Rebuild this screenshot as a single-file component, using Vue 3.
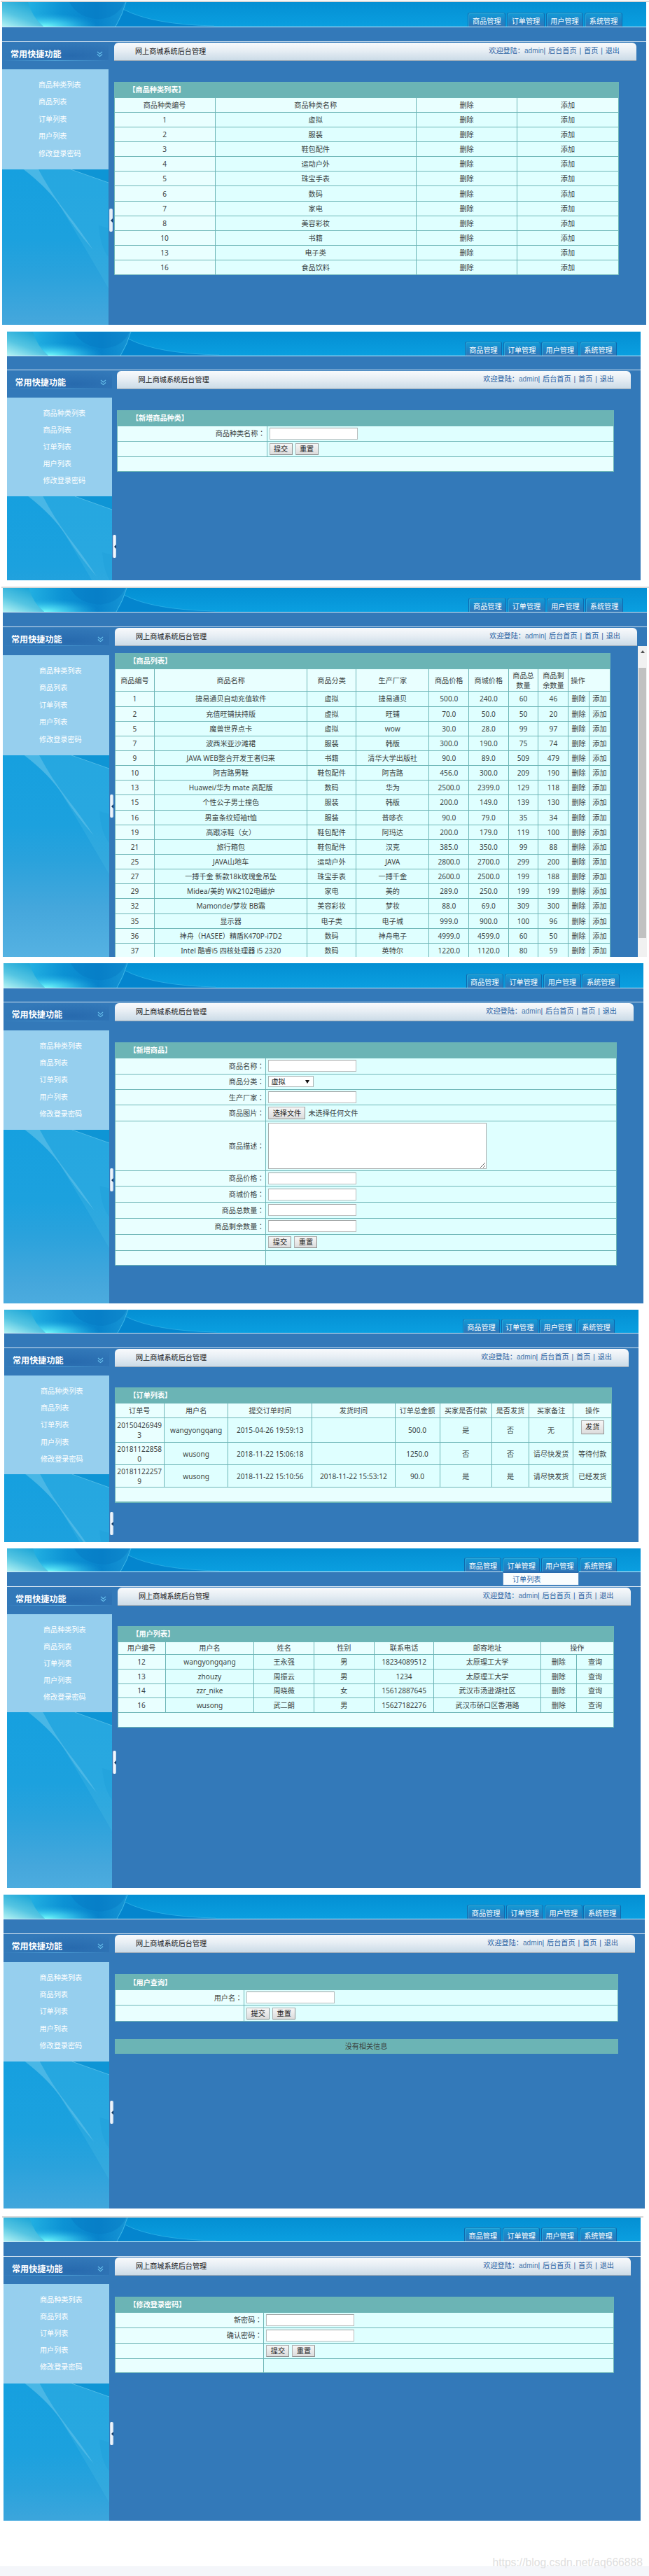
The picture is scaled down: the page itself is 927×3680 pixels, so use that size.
<template>
    <div class="page">
        <section v-for="screen in screens" :key="screen.id" class="screen" :class="'screen-' + screen.id">
            <header class="banner">
                <svg class="banner-art" viewBox="0 0 303 36" preserveAspectRatio="none">
                    <defs>
                        <linearGradient :id="'haze-' + screen.id" x1="0" y1="1" x2="0.7" y2="0">
                            <stop offset="0" stop-color="#b4f3f4" />
                            <stop offset="0.45" stop-color="#55c5e2" />
                            <stop offset="1" stop-color="#17a3d6" />
                        </linearGradient>
                        <linearGradient :id="'disc-' + screen.id" x1="0" y1="0" x2="1" y2="0">
                            <stop offset="0" stop-color="#22b0e2" />
                            <stop offset="0.35" stop-color="#0c92d4" />
                            <stop offset="0.7" stop-color="#0883cb" />
                            <stop offset="1" stop-color="#1695d5" />
                        </linearGradient>
                        <radialGradient :id="'glow-' + screen.id" cx="0.16" cy="1" r="0.55">
                            <stop offset="0" stop-color="#74fbfb" />
                            <stop offset="0.5" stop-color="#40cdee" stop-opacity="0.7" />
                            <stop offset="1" stop-color="#1fa9e0" stop-opacity="0" />
                        </radialGradient>
                    </defs>
                    <path d="M0 0H40Q45 22 62 36H0Z" :fill="`url(#haze-${screen.id})`" />
                    <path d="M37 0H177Q172 18 162 36H59Q43 22 37 0Z" :fill="`url(#disc-${screen.id})`" />
                    <path d="M37 0H177Q172 18 162 36H59Q43 22 37 0Z" :fill="`url(#glow-${screen.id})`" />
                    <path d="M96 0Q108 24 140 25Q166 22 175 0Z" fill="#067ac4" opacity="0.45" />
                    <path d="M174 11Q215 33 303 35V36H162Q170 24 174 11Z" fill="#0481cb" opacity="0.85" />
                    <path d="M174 11Q215 33 303 35" fill="none" stroke="#2fb0e6" stroke-width="0.8" />
                    <path d="M177 0Q172 18 162 36" fill="none" stroke="#4dbdeb" stroke-width="0.8" />
                </svg>
                <nav class="tabs">
                    <span v-for="tab in tabs" :key="tab" class="tab">{{ tab }}</span>
                </nav>
            </header>
            <div class="strip">
                <div v-if="screen.menu" class="dropdown">{{ screen.menu }}</div>
            </div>
            <div class="main">
                <aside class="sidebar">
                    <div class="side-title">
                        <span>常用快捷功能</span>
                        <svg class="chevrons" viewBox="0 0 10 10">
                            <path d="M1 1L5 4.4L9 1M1 5L5 8.4L9 5" fill="none" stroke="#69c3ee" stroke-width="1.2" />
                        </svg>
                    </div>
                    <ul class="side-list">
                        <li v-for="link in links" :key="link">{{ link }}</li>
                    </ul>
                    <div class="side-art">
                        <svg viewBox="0 0 152 290" preserveAspectRatio="none">
                            <path d="M30 0Q66 26 84 55T152 170V0Z" fill="#49b9e6" opacity="0.3" />
                            <path d="M98 0L152 19V0Z" fill="#0b92d2" opacity="0.85" />
                            <path d="M98 0L152 19" stroke="#5cc2ea" stroke-width="0.8" />
                            <path d="M31 0H52Q70 34 92 62T130 115Q103 84 86 57T31 0Z" fill="#79cdef" opacity="0.42" />
                            <path d="M138 80L152 84V125Q140 110 138 80Z" fill="#1d9dda" opacity="0.4" />
                        </svg>
                    </div>
                </aside>
                <div class="grip"><i></i></div>
                <div class="content">
                    <div class="topbar">
                        <span class="site">网上商城系统后台管理</span>
                        <span class="account">欢迎登陆：<em>admin</em>| 后台首页 | 首页 | 退出</span>
                    </div>
                    <div class="grid">
                        <div class="cell title">【{{ screen.title }}】</div>
                        <template v-if="screen.head">
                            <div
                                v-for="(name, i) in screen.head"
                                :key="'h' + i"
                                class="cell pale"
                                :class="{ last: i === screen.head.length - 1 }"
                            >{{ name }}</div>
                            <template v-for="(row, r) in screen.rows" :key="r">
                                <div v-for="(value, c) in row" :key="c" class="cell" :class="{ pale: c === 0 }">
                                    <button v-if="value === '发货'" class="btn ship">发货</button>
                                    <template v-else>{{ value }}</template>
                                </div>
                            </template>
                        </template>
                        <template v-else>
                            <template v-for="(field, f) in screen.fields" :key="f">
                                <div class="cell pale label">{{ field.label }}<span v-if="field.label" class="colon">：</span></div>
                                <div class="cell value">
                                    <input v-if="field.type === 'text'" class="box" type="text">
                                    <span v-else-if="field.type === 'select'" class="select">虚拟<i></i></span>
                                    <template v-else-if="field.type === 'file'">
                                        <button class="btn file">选择文件</button>
                                        <span>未选择任何文件</span>
                                    </template>
                                    <textarea v-else-if="field.type === 'area'" class="area"></textarea>
                                    <template v-else-if="field.type === 'buttons'">
                                        <button class="btn">提交</button>
                                        <button class="btn">重置</button>
                                    </template>
                                </div>
                            </template>
                        </template>
                        <div v-if="screen.blank" class="cell pale blank"></div>
                    </div>
                    <div v-if="screen.notice" class="notice">{{ screen.notice }}</div>
                </div>
                <div v-if="screen.scroll" class="scrollbar">
                    <i class="arrow"></i>
                    <i class="thumb"></i>
                </div>
            </div>
        </section>
        <footer class="foot">
            <span>https://blog.csdn.net/aq666888</span>
        </footer>
    </div>
</template>

<script setup>
const tabs = ['商品管理', '订单管理', '用户管理', '系统管理'];
const links = ['商品种类列表', '商品列表', '订单列表', '用户列表', '修改登录密码'];

const categories = [
    ['1', '虚拟'],
    ['2', '服装'],
    ['3', '鞋包配件'],
    ['4', '运动户外'],
    ['5', '珠宝手表'],
    ['6', '数码'],
    ['7', '家电'],
    ['8', '美容彩妆'],
    ['10', '书籍'],
    ['13', '电子类'],
    ['16', '食品饮料'],
];

const products = [
    ['1', '捷易通贝自动充值软件', '虚拟', '捷易通贝', '500.0', '240.0', '60', '46'],
    ['2', '充值旺铺扶持版', '虚拟', '旺铺', '70.0', '50.0', '50', '20'],
    ['5', '魔兽世界点卡', '虚拟', 'wow', '30.0', '28.0', '99', '97'],
    ['7', '波西米亚沙滩裙', '服装', '韩版', '300.0', '190.0', '75', '74'],
    ['9', 'JAVA WEB整合开发王者归来', '书籍', '清华大学出版社', '90.0', '89.0', '509', '479'],
    ['10', '阿吉路男鞋', '鞋包配件', '阿吉路', '456.0', '300.0', '209', '190'],
    ['13', 'Huawei/华为 mate 高配版', '数码', '华为', '2500.0', '2399.0', '129', '118'],
    ['15', '个性公子男士撞色', '服装', '韩版', '200.0', '149.0', '139', '130'],
    ['16', '男童条纹短袖t恤', '服装', '普哆衣', '90.0', '79.0', '35', '34'],
    ['19', '高跟凉鞋（女）', '鞋包配件', '阿玛达', '200.0', '179.0', '119', '100'],
    ['21', '旅行箱包', '鞋包配件', '汉克', '385.0', '350.0', '99', '88'],
    ['25', 'JAVA山地车', '运动户外', 'JAVA', '2800.0', '2700.0', '299', '200'],
    ['27', '一搏千金 新款18k玫瑰金吊坠', '珠宝手表', '一搏千金', '2600.0', '2500.0', '199', '188'],
    ['29', 'Midea/美的 WK2102电磁炉', '家电', '美的', '289.0', '250.0', '199', '199'],
    ['32', 'Mamonde/梦妆 BB霜', '美容彩妆', '梦妆', '88.0', '69.0', '309', '300'],
    ['35', '显示器', '电子类', '电子城', '999.0', '900.0', '100', '96'],
    ['36', '神舟（HASEE）精盾K470P-i7D2', '数码', '神舟电子', '4999.0', '4599.0', '60', '50'],
    ['37', 'Intel 酷睿i5 四核处理器 i5 2320', '数码', '英特尔', '1220.0', '1120.0', '80', '59'],
];

const orders = [
    ['201504269493', 'wangyongqang', '2015-04-26 19:59:13', '', '500.0', '是', '否', '无', '发货'],
    ['201811228580', 'wusong', '2018-11-22 15:06:18', '', '1250.0', '否', '否', '请尽快发货', '等待付款'],
    ['201811222579', 'wusong', '2018-11-22 15:10:56', '2018-11-22 15:53:12', '90.0', '是', '是', '请尽快发货', '已经发货'],
];

const users = [
    ['12', 'wangyongqang', '王永强', '男', '18234089512', '太原理工大学'],
    ['13', 'zhouzy', '周振云', '男', '1234', '太原理工大学'],
    ['14', 'zzr_nike', '周晓薇', '女', '15612887645', '武汉市汤逊湖社区'],
    ['16', 'wusong', '武二朗', '男', '15627182276', '武汉市硚口区香港路'],
];

const screens = [
    {
        id: 'categories',
        title: '商品种类列表',
        head: ['商品种类编号', '商品种类名称', '删除', '添加'],
        rows: categories.map((row) => [...row, '删除', '添加']),
    },
    {
        id: 'new-category',
        title: '新增商品种类',
        fields: [
            { label: '商品种类名称', type: 'text' },
            { label: '', type: 'buttons' },
        ],
        blank: true,
    },
    {
        id: 'products',
        title: '商品列表',
        head: ['商品编号', '商品名称', '商品分类', '生产厂家', '商品价格', '商城价格', '商品总\n数量', '商品剩\n余数量', '操作'],
        rows: products.map((row) => [...row, '删除', '添加']),
        scroll: true,
    },
    {
        id: 'new-product',
        title: '新增商品',
        fields: [
            { label: '商品名称', type: 'text' },
            { label: '商品分类', type: 'select' },
            { label: '生产厂家', type: 'text' },
            { label: '商品图片', type: 'file' },
            { label: '商品描述', type: 'area' },
            { label: '商品价格', type: 'text' },
            { label: '商城价格', type: 'text' },
            { label: '商品总数量', type: 'text' },
            { label: '商品剩余数量', type: 'text' },
            { label: '', type: 'buttons' },
            { label: '', type: '' },
        ],
    },
    {
        id: 'orders',
        title: '订单列表',
        head: ['订单号', '用户名', '提交订单时间', '发货时间', '订单总金额', '买家是否付款', '是否发货', '买家备注', '操作'],
        rows: orders,
        blank: true,
    },
    {
        id: 'users',
        title: '用户列表',
        menu: '订单列表',
        head: ['用户编号', '用户名', '姓名', '性别', '联系电话', '邮寄地址', '操作'],
        rows: users.map((row) => [...row, '删除', '查询']),
        blank: true,
    },
    {
        id: 'user-search',
        title: '用户查询',
        fields: [
            { label: '用户名', type: 'text' },
            { label: '', type: 'buttons' },
        ],
        notice: '没有相关信息',
    },
    {
        id: 'password',
        title: '修改登录密码',
        fields: [
            { label: '新密码', type: 'text' },
            { label: '确认密码', type: 'text' },
            { label: '', type: 'buttons' },
            { label: '', type: '' },
        ],
    },
];
</script>

<style>
body {
    background: #fff;
}
</style>

<style scoped>
.page {
    width: 927px;
    height: 3680px;
    overflow: hidden;
    display: flex;
    flex-direction: column;
    font-family: "Noto Sans", "Noto Sans CJK SC", sans-serif;
    font-size: 10.15px;
    line-height: 14px;
    color: #3c4444;
}

.screen {
    position: relative;
    flex: none;
    display: flex;
    flex-direction: column;
    box-sizing: border-box;
    background: #3379b9;
    width: var(--w);
    height: var(--h);
    margin-top: var(--mt);
    margin-left: var(--ml);
}

.banner {
    flex: none;
    display: flex;
    justify-content: space-between;
    align-items: flex-end;
    box-sizing: border-box;
    height: var(--banner);
    background: linear-gradient(#048fd3, #0a9fe0);
    border-bottom: 1px solid #cfe9f5;
}

.banner-art {
    width: 303px;
    height: 100%;
}

.tabs {
    display: flex;
    gap: 1.7px;
    padding-right: 34px;
}

.tab {
    width: var(--tab);
    height: 20px;
    box-sizing: border-box;
    border: 1px solid #0f68ad;
    border-top-color: #1b7fb8;
    border-bottom: 0;
    border-radius: 3px 3px 0 0;
    background: linear-gradient(#129bd6, #1d86c8 50%, #3377b8);
    box-shadow: inset 1px 1px 0 #29a6da;
    color: #fff;
    text-align: center;
    line-height: 22px;
    white-space: nowrap;
}

.strip {
    position: relative;
    flex: none;
    box-sizing: border-box;
    height: var(--strip);
    border-bottom: 1px solid #d3e3f0;
}

.dropdown {
    position: absolute;
    z-index: 1;
    top: -1px;
    left: 708px;
    width: 109px;
    height: 20px;
    box-sizing: border-box;
    padding-left: 13px;
    line-height: 18px;
    background: #fafdfe;
    border: 1px solid #5a8fc0;
    border-top: 2px solid #2a6cae;
    color: #2b67a8;
}

.main {
    flex: 1;
    min-height: 0;
    display: flex;
    align-items: stretch;
    overflow: hidden;
}

.sidebar {
    flex: none;
    width: var(--side);
    display: flex;
    flex-direction: column;
}

.side-title {
    flex: none;
    display: flex;
    justify-content: space-between;
    align-items: center;
    box-sizing: border-box;
    height: 27px;
    margin-bottom: calc(var(--list-top) - 27px);
    padding: 9px 8px 0 12px;
    font-size: 12.1px;
    font-weight: bold;
    color: #fff;
    border-bottom: 1px solid transparent;
    border-image: linear-gradient(90deg, #3379b9, #4ea0d6 50%, #3379b9) 1;
    background: radial-gradient(ellipse at 65% 75%, #276aae, #3379b9 70%);
}

.chevrons {
    width: 9px;
    height: 9px;
}

.side-list {
    flex: none;
    box-sizing: border-box;
    height: var(--list-h);
    margin: 0;
    padding: 9.7px 0 0 52px;
    list-style: none;
    background: #96cfee;
    color: #fff;
}

.side-list li {
    height: var(--step);
    line-height: var(--step);
}

.side-art {
    flex: 1;
    min-height: 0;
    overflow: hidden;
    background: linear-gradient(#16a0df, #1ca1de 100px, #2aa2dc 150px, #45a7dc 220px, #56b2e2 290px);
}

.side-art svg {
    display: block;
    width: 100%;
    height: 290px;
}

.grip {
    flex: none;
    display: flex;
    align-items: center;
    justify-content: flex-end;
    width: 5px;
    height: 33px;
    margin: var(--grip) 1.5px 0 1px;
    border-radius: 2px;
    background: linear-gradient(90deg, #c3d6ea, #f2f7fc 50%, #c9daec);
}

.grip i {
    border: 3px solid transparent;
    border-left: 0;
    border-right-color: #123a66;
}

.content {
    flex: 1;
    min-width: 0;
    padding-top: 1px;
}

.topbar {
    display: flex;
    justify-content: space-between;
    box-sizing: border-box;
    height: 26px;
    margin-right: 14px;
    padding: 0 24px 0 30.5px;
    line-height: 24px;
    border-bottom: 1px solid #9aa9b6;
    border-radius: 6px 6px 0 0;
    background: linear-gradient(#f8fafc, #e7eef4 45%, #cbdbe7);
    white-space: nowrap;
}

.site {
    color: #151515;
}

.account {
    font-family: "Liberation Sans", "Noto Sans CJK SC", sans-serif;
    word-spacing: 1.1px;
    color: #2a62a3;
}

.account em {
    font-style: normal;
    color: #4778ad;
}

.grid {
    display: grid;
    gap: 1px;
    box-sizing: border-box;
    width: var(--grid-w);
    height: var(--grid-h);
    margin-top: var(--grid-top);
    padding: 1px;
    background: #6cb5b6;
    grid-template-columns: var(--cols);
    grid-template-rows: var(--rows);
}

.cell {
    display: flex;
    align-items: center;
    justify-content: center;
    min-width: 0;
    min-height: 0;
    padding: 0 1px;
    background: #dfffff;
    text-align: center;
    white-space: pre-line;
    word-break: break-all;
}

.pale {
    background: #e9ffff;
}

.title {
    grid-column: 1 / -1;
    justify-content: flex-start;
    padding-left: 20px;
    background: #6bb4b5;
    color: #fff;
    font-weight: bold;
}

.blank {
    grid-column: 1 / -1;
}

.label {
    justify-content: flex-end;
    padding-right: 2px;
}

.colon {
    font-family: "Noto Sans CJK TC", sans-serif;
}

.value {
    justify-content: flex-start;
    gap: 4px;
    padding-left: 3px;
}

.box {
    box-sizing: border-box;
    width: 126px;
    height: 17px;
    padding: 0;
    border: 1px solid #b9bcbc;
    border-top-color: #9fa3a3;
    background: #fff;
    appearance: none;
}

.btn {
    box-sizing: border-box;
    width: 33px;
    height: 17px;
    padding: 0;
    border: 1px solid #b0b0b0;
    border-right-color: #8e8e8e;
    border-bottom-color: #8e8e8e;
    border-radius: 1px;
    background: linear-gradient(#f6f6f6, #dcdcdc);
    font-family: inherit;
    font-size: 10.15px;
    line-height: 15px;
    color: #222;
    white-space: nowrap;
}

.btn.file {
    width: 53px;
    height: 18px;
}

.btn.ship {
    height: 20px;
    margin-bottom: 8px;
}

.select {
    display: flex;
    align-items: center;
    justify-content: space-between;
    box-sizing: border-box;
    width: 65px;
    height: 16px;
    padding: 0 5px 0 3px;
    border: 1px solid #a9b4b4;
    background: #fff;
    color: #111;
}

.select i {
    border: 3px solid transparent;
    border-top: 5px solid #111;
    border-bottom: 0;
}

.area {
    box-sizing: border-box;
    width: 312px;
    height: 66px;
    border: 1px solid #a9adad;
    background: #fff;
}

.notice {
    width: var(--grid-w);
    height: 21px;
    margin-top: 25px;
    background: #6bb4b5;
    line-height: 21px;
    text-align: center;
}

.scrollbar {
    flex: none;
    display: flex;
    flex-direction: column;
    align-items: center;
    width: 13px;
    margin-top: 27px;
    margin-left: -13px;
    background: #f1f1f1;
}

.arrow {
    margin-top: 6px;
    border: 3.5px solid transparent;
    border-top: 0;
    border-bottom: 4px solid #505050;
}

.thumb {
    width: 11px;
    height: 386px;
    margin-top: 21px;
    background: #c1c1c1;
}

/* thin grey rule left by the browser chrome above some of the screens */
.screen-categories::before,
.screen-products::before,
.screen-password::before {
    content: "";
    position: absolute;
    top: -2px;
    left: -2px;
    right: -4px;
    height: 2px;
    background: #d8d8d8;
}

.screen-new-category,
.screen-user-search {
    box-shadow: 0 -1px 0 #bfe7f7;
}

.screen-categories {
    --mt: 3px;
    --ml: 3px;
    --w: 920px;
    --h: 461px;
    --banner: 36px;
    --strip: 21px;
    --tab: 53.9px;
    --side: 152px;
    --list-top: 39px;
    --list-h: 143px;
    --step: 24.6px;
    --grip: 238px;
    --grid-top: 30px;
    --grid-w: 721px;
    --grid-h: 276px;
    --cols: 244fr 488fr 245fr 244fr;
    --rows: 66fr repeat(12, 63.4fr);
}

.screen-new-category {
    --mt: 10px;
    --ml: 9.5px;
    --w: 905.5px;
    --h: 355px;
    --banner: 35px;
    --strip: 20px;
    --tab: 53px;
    --side: 150px;
    --list-top: 39px;
    --list-h: 141px;
    --step: 24.1px;
    --grip: 235px;
    --grid-top: 30px;
    --grid-w: 710px;
    --grid-h: 88px;
    --cols: 361fr 840fr;
    --rows: 66fr 65fr 68fr 62fr;
}

.screen-products {
    --mt: 11px;
    --ml: 4px;
    --w: 920px;
    --h: 527px;
    --banner: 35px;
    --strip: 21px;
    --tab: 53.9px;
    --side: 152px;
    --list-top: 40px;
    --list-h: 143px;
    --step: 24.5px;
    --grip: 239px;
    --grid-top: 10px;
    --grid-w: 708.5px;
    --grid-h: 436px;
    --cols: 96fr 372fr 119fr 177fr 96fr 95fr 72fr 72fr 49fr 50fr;
    --rows: 62fr 95fr repeat(18, 60.35fr);
}

.screen-new-product {
    --mt: 9px;
    --ml: 4.5px;
    --w: 914.5px;
    --h: 486px;
    --banner: 36px;
    --strip: 20px;
    --tab: 53.6px;
    --side: 151.5px;
    --list-top: 40px;
    --list-h: 142px;
    --step: 24.35px;
    --grip: 237px;
    --grid-top: 30px;
    --grid-w: 717.5px;
    --grid-h: 319px;
    --cols: 365fr 848fr;
    --rows: 65fr 68fr 66fr 68fr 68fr 217fr 67fr 68fr 69fr 68fr 68fr 64fr;
}

.screen-orders {
    --mt: 9px;
    --ml: 6px;
    --w: 906px;
    --h: 332px;
    --banner: 34px;
    --strip: 21px;
    --tab: 53px;
    --side: 150px;
    --list-top: 39px;
    --list-h: 141px;
    --step: 24.3px;
    --grip: 234px;
    --grid-top: 29px;
    --grid-w: 710.5px;
    --grid-h: 164.5px;
    --cols: 119fr 155fr 204fr 201fr 108fr 126fr 89fr 107fr 92fr;
    --rows: 65fr 62fr 108fr 97fr 98fr 63fr;
}

.screen-users {
    --mt: 9px;
    --ml: 10px;
    --w: 904.5px;
    --h: 485px;
    --banner: 34px;
    --strip: 21px;
    --tab: 53px;
    --side: 150px;
    --list-top: 39px;
    --list-h: 140px;
    --step: 24.2px;
    --grip: 234px;
    --grid-top: 29px;
    --grid-w: 709.5px;
    --grid-h: 145px;
    --cols: 115fr 215fr 145fr 145fr 145fr 259fr 86fr 89fr;
    --rows: 65fr 56fr 63fr 62fr 62fr 63fr 63fr;
}

.screen-user-search {
    --mt: 10px;
    --ml: 4.5px;
    --w: 916.5px;
    --h: 448px;
    --banner: 35px;
    --strip: 21px;
    --tab: 53.7px;
    --side: 151.5px;
    --list-top: 40px;
    --list-h: 142px;
    --step: 24.4px;
    --grip: 238px;
    --grid-top: 30px;
    --grid-w: 719px;
    --grid-h: 68px;
    --cols: 312fr 904fr;
    --rows: 67fr 66fr 69fr;
}

.screen-password {
    --mt: 13px;
    --ml: 5px;
    --w: 910px;
    --h: 433px;
    --banner: 35px;
    --strip: 21px;
    --tab: 53.2px;
    --side: 151px;
    --list-top: 39px;
    --list-h: 142px;
    --step: 24.2px;
    --grip: 236px;
    --grid-top: 30px;
    --grid-w: 713.5px;
    --grid-h: 109px;
    --cols: 360fr 847fr;
    --rows: 65fr 66fr 67fr 68fr 59fr;
}

/* the heading of the two action columns */
.screen-products .last {
    grid-column: span 2;
    justify-content: flex-start;
    padding-left: 3px;
}

.screen-users .last {
    grid-column: span 2;
}

.foot {
    flex: 1;
    display: flex;
    justify-content: flex-end;
    align-items: flex-end;
    padding: 0 9px 9px 0;
    background: linear-gradient(transparent calc(100% - 14px), #f4f6fa calc(100% - 14px));
    font-family: "Liberation Sans", sans-serif;
    font-size: 15.7px;
    line-height: 20px;
    color: #dedede;
}
</style>
